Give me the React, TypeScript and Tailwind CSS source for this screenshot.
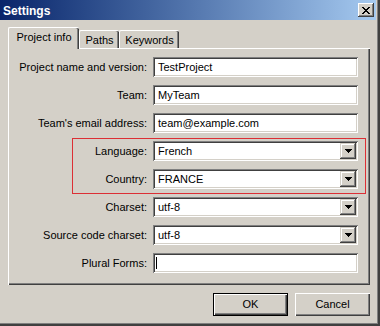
import React from "react";

const sunken =
  "shadow-[inset_1px_1px_#808080,inset_-1px_-1px_#ffffff,inset_2px_2px_#404040,inset_-2px_-2px_#d4d0c8]";
const raised =
  "shadow-[inset_-1px_-1px_#404040,inset_1px_1px_#d4d0c8,inset_-2px_-2px_#808080,inset_2px_2px_#ffffff]";

function Arrow() {
  return (
    <svg width="7" height="4" viewBox="0 0 7 4" shapeRendering="crispEdges">
      <path d="M0 0h7v1h-1v1h-1v1h-1v1h-1v-1h-1v-1h-1v-1h-1z" fill="#000" />
    </svg>
  );
}

function Row({ label, children }: { label: string; children: React.ReactNode }) {
  return (
    <div className="flex items-center justify-end h-[20px] pr-[12px]">
      <span className="mr-[6px] whitespace-nowrap">{label}</span>
      <div className="w-[205px] h-[20px]">{children}</div>
    </div>
  );
}

function TextBox({ value }: { value: string }) {
  return (
    <div className={`h-full w-full bg-white flex items-center pl-[5px] ${sunken}`}>
      <span className="whitespace-nowrap">{value}</span>
    </div>
  );
}

function Combo({ value }: { value: string }) {
  return (
    <div className={`h-full w-full bg-white flex items-center p-[2px] ${sunken}`}>
      <span className="flex-1 pl-[3px] whitespace-nowrap">{value}</span>
      <div className={`w-[16px] h-[16px] bg-[#d4d0c8] flex items-center justify-center ${raised}`}>
        <Arrow />
      </div>
    </div>
  );
}

export default function App() {
  return (
    <div className="w-[380px] h-[326px] bg-[#d4d0c8] flex flex-col font-['Liberation_Sans',Arial,sans-serif] text-[11px] leading-[13px] text-black shadow-[inset_-2px_-2px_#404040,inset_-3px_-3px_#808080] overflow-hidden">
      {/* Title bar */}
      <div className="w-[376px] h-[20px] flex items-center bg-gradient-to-r from-[#0a246a] to-[#a6caf0] pl-[3px] pr-[2px]">
        <span className="text-white font-bold text-[12px] leading-[14px] pt-[2px]">Settings</span>
        <div
          className={`ml-auto w-[16px] h-[14px] bg-[#d4d0c8] flex items-center justify-center shadow-[inset_-1px_-1px_#404040,inset_1px_1px_#ffffff,inset_-2px_-2px_#808080,inset_2px_2px_#d4d0c8]`}
        >
          <svg width="8" height="7" viewBox="0 0 8 7" shapeRendering="crispEdges">
            <path
              d="M0 0h2v1h-2zM6 0h2v1h-2zM1 1h2v1h-2zM5 1h2v1h-2zM2 2h4v1h-4zM3 3h2v1h-2zM2 4h4v1h-4zM1 5h2v1h-2zM5 5h2v1h-2zM0 6h2v1h-2zM6 6h2v1h-2z"
              fill="#000"
            />
          </svg>
        </div>
      </div>

      <div className="flex flex-col pl-[8px]">
        {/* Tabs */}
        <div className="flex items-end h-[21px] mt-[7px]">
          <div className="relative z-10 w-[71px] h-[22px] mb-[-1px] bg-[#d4d0c8] border-l border-t border-white rounded-tl-[2px] rounded-tr-[2px] shadow-[inset_-1px_0_#404040,inset_-2px_0_#808080] pt-[3px] text-center">
            Project info
          </div>
          <div className="w-[40px] h-[18px] bg-[#d4d0c8] border-l border-t border-white rounded-tl-[2px] rounded-tr-[2px] shadow-[inset_-1px_0_#404040,inset_-2px_0_#808080] pt-[3px] text-center">
            Paths
          </div>
          <div className="w-[60px] h-[18px] bg-[#d4d0c8] border-l border-t border-white rounded-tl-[2px] rounded-tr-[2px] shadow-[inset_-1px_0_#404040,inset_-2px_0_#808080] pt-[3px] text-center">
            Keywords
          </div>
        </div>

        {/* Panel */}
        <div className="w-[362px] h-[237px] bg-[#d4d0c8] shadow-[inset_1px_1px_#ffffff,inset_-1px_-1px_#404040,inset_-2px_-2px_#808080] pt-[9px] flex flex-col gap-[8px]">
          <Row label="Project name and version:">
            <TextBox value="TestProject" />
          </Row>
          <Row label="Team:">
            <TextBox value="MyTeam" />
          </Row>
          <Row label="Team's email address:">
            <TextBox value="team@example.com" />
          </Row>
          <div className="relative flex flex-col gap-[8px]">
            <div className="absolute left-[64px] right-[4px] -top-[3px] -bottom-[5px] border border-[#dc2f35] pointer-events-none" />
            <Row label="Language:">
              <Combo value="French" />
            </Row>
            <Row label="Country:">
              <Combo value="FRANCE" />
            </Row>
          </div>
          <Row label="Charset:">
            <Combo value="utf-8" />
          </Row>
          <Row label="Source code charset:">
            <Combo value="utf-8" />
          </Row>
          <Row label="Plural Forms:">
            <div className={`h-full w-full bg-white flex items-center pl-[3px] ${sunken}`}>
              <div className="w-px h-[12px] bg-black" />
            </div>
          </Row>
        </div>

        {/* Buttons */}
        <div className="w-[362px] flex justify-end gap-[7px] mt-[8px]">
          <div className="w-[75px] h-[23px] border border-black bg-[#d4d0c8] shadow-[inset_1px_1px_#ffffff,inset_-1px_-1px_#404040,inset_-2px_-2px_#808080] flex items-center justify-center">
            OK
          </div>
          <div className="w-[75px] h-[23px] bg-[#d4d0c8] shadow-[inset_1px_1px_#ffffff,inset_-1px_-1px_#404040,inset_-2px_-2px_#808080] flex items-center justify-center">
            Cancel
          </div>
        </div>
      </div>
    </div>
  );
}
